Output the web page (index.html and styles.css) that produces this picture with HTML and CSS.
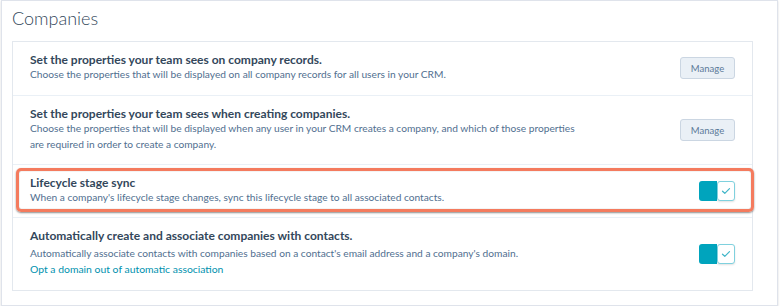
FILE: index.html
```html
<!DOCTYPE html>
<html lang="en">
<head>
    <meta charset="UTF-8">
    <meta name="viewport" content="width=device-width, initial-scale=1.0">
    <title>Companies</title>
    <link rel="stylesheet" href="styles.css">
</head>
<body>
    <div class="page">
        <h1>Companies</h1>

        <div class="settings-card">
            <div class="setting-row">
                <div class="setting-text">
                    <p class="setting-title">Set the properties your team sees on company records.</p>
                    <p class="setting-desc">Choose the properties that will be displayed on all company records for all users in your CRM.</p>
                </div>
                <button class="manage-btn">Manage</button>
            </div>

            <div class="setting-row">
                <div class="setting-text">
                    <p class="setting-title">Set the properties your team sees when creating companies.</p>
                    <p class="setting-desc">Choose the properties that will be displayed when any user in your CRM creates a company, and which of those properties<br>are required in order to create a company.</p>
                </div>
                <button class="manage-btn">Manage</button>
            </div>

            <div class="setting-row highlighted">
                <div class="setting-text">
                    <p class="setting-title">Lifecycle stage sync</p>
                    <p class="setting-desc">When a company's lifecycle stage changes, sync this lifecycle stage to all associated contacts.</p>
                </div>
                <div class="toggle">
                    <span class="toggle-fill"></span>
                    <span class="toggle-knob">
                        <svg width="10" height="8" viewBox="0 0 10 8"><path d="M1.5 4.2 L3.8 6.3 L8.5 1.6" fill="none" stroke="#3fb5c8" stroke-width="1.2" stroke-linecap="round" stroke-linejoin="round"/></svg>
                    </span>
                </div>
                <div class="highlight-ring"></div>
            </div>

            <div class="setting-row">
                <div class="setting-text">
                    <p class="setting-title">Automatically create and associate companies with contacts.</p>
                    <p class="setting-desc spaced">Automatically associate contacts with companies based on a contact's email address and a company's domain.</p>
                    <a class="setting-link" href="#">Opt a domain out of automatic association</a>
                </div>
                <div class="toggle">
                    <span class="toggle-fill"></span>
                    <span class="toggle-knob">
                        <svg width="10" height="8" viewBox="0 0 10 8"><path d="M1.5 4.2 L3.8 6.3 L8.5 1.6" fill="none" stroke="#3fb5c8" stroke-width="1.2" stroke-linecap="round" stroke-linejoin="round"/></svg>
                    </span>
                </div>
            </div>
        </div>
    </div>
</body>
</html>
```

FILE: styles.css
```css
body {
    margin: 0;
    background-color: #fff;
    font-family: Lato, "Open Sans", sans-serif;
    color: #33475b;
}

.page {
    margin: 0 2px 0 1px;
    padding: 4px 24px 14px 10px;
    border: 1px solid #dfe3eb;
    background-color: #fff;
    box-shadow: 0 1px 2px rgba(0, 0, 0, 0.15);
}

h1 {
    margin: 0;
    font-size: 18px;
    font-weight: 300;
    line-height: 26px;
    color: #33475b;
}

.settings-card {
    margin-top: 10px;
    border: 1px solid #e3e8ee;
}

.setting-row {
    position: relative;
    display: flex;
    align-items: center;
    justify-content: space-between;
    padding: 12px 17px;
    border-top: 1px solid #eaf0f6;
}

.setting-row:first-child {
    border-top: none;
    padding: 12px 17px 13px;
}

.setting-text p {
    margin: 0;
}

.setting-title {
    font-size: 12px;
    font-weight: 700;
    line-height: 12px;
    color: #33475b;
}

.setting-desc {
    font-size: 10.2px;
    line-height: 16px;
    color: #516f90;
}

.setting-desc.spaced {
    margin-top: 3px;
}

.setting-link {
    display: block;
    font-size: 10.4px;
    line-height: 17px;
    color: #0091ae;
    text-decoration: none;
}

.manage-btn {
    width: 55px;
    height: 22px;
    padding: 0;
    font-family: Lato, "Open Sans", sans-serif;
    font-size: 9.5px;
    color: #5c7a99;
    background-color: #eaf0f6;
    border: 1px solid #cbd6e2;
    border-radius: 3px;
}

.toggle {
    display: flex;
    width: 36px;
    height: 20px;
}

.toggle-fill {
    flex: 1;
    background-color: #00a4bd;
    border-radius: 3px 0 0 3px;
}

.toggle-knob {
    display: flex;
    align-items: center;
    justify-content: center;
    width: 18px;
    background-color: #fff;
    border: 1px solid #7fd1de;
    border-radius: 3px;
    box-sizing: border-box;
    box-shadow: 0 1px 2px rgba(0, 0, 0, 0.12);
}

/* annotation ring drawn over the lifecycle row */
.highlight-ring {
    position: absolute;
    top: 3px;
    left: 3px;
    right: -2px;
    bottom: 5px;
    border: 3px solid #f47b5e;
    border-radius: 5px;
    box-shadow: 0 1px 2px rgba(0, 0, 0, 0.45), inset 0 0 1px rgba(0, 0, 0, 0.45);
    pointer-events: none;
}
```
